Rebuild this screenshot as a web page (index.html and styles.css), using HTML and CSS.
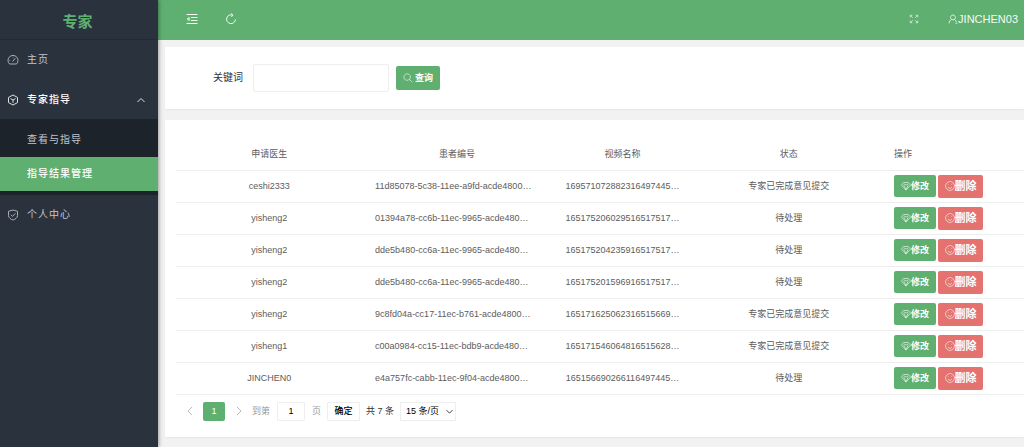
FILE: index.html
```html
<!DOCTYPE html>
<html lang="zh-CN">
<head>
<meta charset="utf-8">
<meta name="viewport" content="width=device-width, initial-scale=1">
<title>专家</title>
<link rel="stylesheet" href="styles.css">
</head>
<body>
<svg class="defs" aria-hidden="true">
  <symbol id="i-gauge" viewBox="0 0 12 12"><path d="M2.500 10A5 5 0 1 1 9.500 10Z M5.700 7.500L8.200 4.200 M2.500 6.500h.7 M6 2.800v.6"/></symbol>
  <symbol id="i-cube" viewBox="0 0 12 12"><path d="M6 1L10.500 3.400V8.600L6 11L1.500 8.600V3.400Z M3.500 4.600L6 6L8.500 4.600 M6 6V8.800"/></symbol>
  <symbol id="i-shield" viewBox="0 0 12 12"><path d="M6 1L10.500 2.300V6.500C10.500 9 8 10.300 6 11C4 10.300 1.500 9 1.500 6.500V2.300Z M3.800 5.800L5.500 7.400L8.400 4.400"/></symbol>
  <symbol id="i-up" viewBox="0 0 12 12"><path d="M2.500 8L6 4.500L9.500 8"/></symbol>
  <symbol id="i-down" viewBox="0 0 12 12"><path d="M2 4.200L6 8.200L10 4.200"/></symbol>
  <symbol id="i-left" viewBox="0 0 12 12"><path d="M8 2L4 6L8 10"/></symbol>
  <symbol id="i-right" viewBox="0 0 12 12"><path d="M4 2L8 6L4 10"/></symbol>
  <symbol id="i-fold" viewBox="0 0 12 12"><path d="M.5 1.500H11.500 M5 4.500H11.500 M5 7.500H11.500 M.5 10.500H11.500 M3.200 4.500L1.200 6L3.200 7.500Z"/></symbol>
  <symbol id="i-refresh" viewBox="0 0 12 12"><path d="M7.800 2.200A4.400 4.400 0 1 0 10.400 6.400 M6.200 .6L8 2.200L6.400 3.900"/></symbol>
  <symbol id="i-full" viewBox="0 0 12 12"><path d="M4.500 4.500L1.500 1.500M1.500 4V1.500H4 M7.500 4.500L10.500 1.500M8 1.500H10.500V4 M4.500 7.500L1.500 10.500M1.500 8V10.500H4 M7.500 7.500L10.500 10.500M10.500 8V10.500H8"/></symbol>
  <symbol id="i-user" viewBox="0 0 12 12"><path d="M6 1.200A2.900 2.900 0 1 1 5.900 1.200Z M4.500 6.500C2.500 7.300 1.500 9 1.300 11.200 M7.500 6.500C8.800 7.200 9.500 8.200 10 9.500 M9 11H11.200"/></symbol>
  <symbol id="i-search" viewBox="0 0 12 12"><path d="M5 1A3.900 3.900 0 1 1 4.900 1Z M7.800 7.700L11.200 11"/></symbol>
  <symbol id="i-gem" viewBox="0 0 12 12"><path d="M3 1.800H9L11.500 5L6 11L.5 5Z M3 5L4.500 3.800L6 5L7.500 3.800L9 5 M3.500 5.200L6 10.500L8.500 5.200"/></symbol>
  <symbol id="i-smile" viewBox="0 0 12 12"><circle cx="6" cy="6" r="5.300"/><path d="M3.500 7.300C4.500 9.200 7.500 9.200 8.500 7.300 M4 4.200V5 M8 4.200V5"/></symbol>
</svg>
<div class="app">
  <aside class="side">
    <h1 class="logo">专家</h1>
    <nav>
      <a class="item" href="#"><svg class="icon"><use href="#i-gauge"/></svg>主页</a>
      <a class="item open" href="#"><svg class="icon"><use href="#i-cube"/></svg>专家指导<svg class="icon caret"><use href="#i-up"/></svg></a>
      <div class="sub">
        <a class="subitem" href="#">查看与指导</a>
        <a class="subitem active" href="#">指导结果管理</a>
      </div>
      <a class="item" href="#"><svg class="icon"><use href="#i-shield"/></svg>个人中心</a>
    </nav>
  </aside>
  <div class="main">
    <header class="top">
      <button class="tool" aria-label="折叠菜单"><svg class="icon"><use href="#i-fold"/></svg></button>
      <button class="tool" aria-label="刷新"><svg class="icon"><use href="#i-refresh"/></svg></button>
      <button class="tool full" aria-label="全屏"><svg class="icon"><use href="#i-full"/></svg></button>
      <a class="user" href="#"><svg class="icon"><use href="#i-user"/></svg>JINCHEN03</a>
    </header>
    <main class="content">
      <form class="card search">
        <label for="kw">关键词</label>
        <input id="kw" class="kw" type="text">
        <button class="btn query" type="button"><svg class="icon"><use href="#i-search"/></svg>查询</button>
      </form>
      <section class="card list">
        <table class="grid">
          <colgroup><col class="c-doctor"><col class="c-patient"><col class="c-video"><col class="c-state"><col class="c-ops"></colgroup>
          <thead><tr><th>申请医生</th><th>患者编号</th><th>视频名称</th><th>状态</th><th class="ops">操作</th></tr></thead>
          <tbody>
            <tr><td>ceshi2333</td><td><div class="code">11d85078-5c38-11ee-a9fd-acde4800…</div></td><td>169571072882316497445…</td><td>专家已完成意见提交</td><td class="ops"><div class="acts"><button class="btn edit"><svg class="icon"><use href="#i-gem"/></svg>修改</button><button class="btn del"><svg class="icon"><use href="#i-smile"/></svg>删除</button></div></td></tr>
            <tr><td>yisheng2</td><td><div class="code">01394a78-cc6b-11ec-9965-acde480…</div></td><td>165175206029516517517…</td><td>待处理</td><td class="ops"><div class="acts"><button class="btn edit"><svg class="icon"><use href="#i-gem"/></svg>修改</button><button class="btn del"><svg class="icon"><use href="#i-smile"/></svg>删除</button></div></td></tr>
            <tr><td>yisheng2</td><td><div class="code">dde5b480-cc6a-11ec-9965-acde480…</div></td><td>165175204235916517517…</td><td>待处理</td><td class="ops"><div class="acts"><button class="btn edit"><svg class="icon"><use href="#i-gem"/></svg>修改</button><button class="btn del"><svg class="icon"><use href="#i-smile"/></svg>删除</button></div></td></tr>
            <tr><td>yisheng2</td><td><div class="code">dde5b480-cc6a-11ec-9965-acde480…</div></td><td>165175201596916517517…</td><td>待处理</td><td class="ops"><div class="acts"><button class="btn edit"><svg class="icon"><use href="#i-gem"/></svg>修改</button><button class="btn del"><svg class="icon"><use href="#i-smile"/></svg>删除</button></div></td></tr>
            <tr><td>yisheng2</td><td><div class="code">9c8fd04a-cc17-11ec-b761-acde4800…</div></td><td>165171625062316515669…</td><td>专家已完成意见提交</td><td class="ops"><div class="acts"><button class="btn edit"><svg class="icon"><use href="#i-gem"/></svg>修改</button><button class="btn del"><svg class="icon"><use href="#i-smile"/></svg>删除</button></div></td></tr>
            <tr><td>yisheng1</td><td><div class="code">c00a0984-cc15-11ec-bdb9-acde480…</div></td><td>165171546064816515628…</td><td>专家已完成意见提交</td><td class="ops"><div class="acts"><button class="btn edit"><svg class="icon"><use href="#i-gem"/></svg>修改</button><button class="btn del"><svg class="icon"><use href="#i-smile"/></svg>删除</button></div></td></tr>
            <tr><td>JINCHEN0</td><td><div class="code">e4a757fc-cabb-11ec-9f04-acde4800…</div></td><td>165156690266116497445…</td><td>待处理</td><td class="ops"><div class="acts"><button class="btn edit"><svg class="icon"><use href="#i-gem"/></svg>修改</button><button class="btn del"><svg class="icon"><use href="#i-smile"/></svg>删除</button></div></td></tr>
          </tbody>
        </table>
        <div class="pager">
          <button class="arrow" aria-label="上一页"><svg class="icon"><use href="#i-left"/></svg></button>
          <button class="page">1</button>
          <button class="arrow" aria-label="下一页"><svg class="icon"><use href="#i-right"/></svg></button>
          <label class="muted" for="pg">到第</label>
          <input id="pg" class="box num" type="text" value="1">
          <span class="muted">页</span>
          <button class="box go">确定</button>
          <span class="total">共 7 条</span>
          <div class="pick"><select class="box size" aria-label="每页条数"><option>15 条/页</option></select><svg class="icon"><use href="#i-down"/></svg></div>
        </div>
      </section>
    </main>
  </div>
</div>
</body>
</html>
```
FILE: styles.css
```css
* { box-sizing: border-box; }
body {
  margin: 0;
  background: #f2f2f2;
  color: #5c5c5c;
  font: 9px/16px "Liberation Sans", "Noto Sans CJK SC", sans-serif;
}
button, input, select { font: inherit; color: inherit; margin: 0; padding: 0; border: 0; background: none; }
a { color: inherit; text-decoration: none; }
.defs { display: none; }
.icon { width: 12px; height: 12px; flex: none; fill: none; stroke: currentColor; stroke-width: 1; }

.app { display: flex; min-height: 100vh; }
.side {
  width: 158px;
  flex: none;
  z-index: 1;
  background: #2a323e;
  color: #c2c5ca;
  box-shadow: 1px 0 4px rgba(0, 0, 0, .35);
}
.logo {
  margin: 0;
  height: 40px;
  padding-right: 3px;
  border-bottom: 1px solid #242b35;
  color: #5fb070;
  font-size: 15px;
  line-height: 44px;
  text-align: center;
}
.item { display: flex; align-items: center; gap: 8px; height: 40px; padding: 0 11px 0 7px; font-size: 10px; letter-spacing: 1px; }
.item .icon { opacity: .85; }
.open { height: 39px; color: #fff; font-weight: 500; }
.caret { margin-left: auto; }
.sub { padding: 4px 0; background: #1d232b; font-size: 10px; letter-spacing: 1px; }
.subitem { display: block; padding-left: 27px; line-height: 34px; }
.active { background: #5fb070; color: #fff; font-weight: 500; }

.main { flex: 1; min-width: 0; }
.top { display: flex; align-items: center; height: 40px; padding: 0 6px 3px 28px; background: #5fb070; color: #f4faf5; }
.tool { display: flex; margin-right: 27px; }
.full { margin-left: auto; margin-right: 29px; opacity: .8; }
.full .icon, .user .icon { width: 10px; height: 10px; }
.user { display: flex; align-items: center; font-size: 11px; }

.content { display: grid; gap: 11px; padding: 7px 0 9px 7px; }
.card { background: #fff; box-shadow: 0 1px 2px rgba(0, 0, 0, .05); }
.search { display: flex; align-items: center; height: 62px; padding-left: 48px; color: #333; font-size: 10px; }
.kw { width: 136px; height: 28px; margin: 0 7px 0 10px; padding: 0 6px; border: 1px solid #eee; border-radius: 2px; }
.btn { display: flex; align-items: center; justify-content: center; border-radius: 2px; background: #5fb070; color: #fff; font-weight: 700; }
.query { width: 44px; height: 24px; gap: 2px; font-size: 9px; }
.btn .icon { width: 10px; height: 10px; stroke-width: .8; opacity: .9; }

.list { padding: 18px 0 16px 11px; }
.grid { width: 100%; table-layout: fixed; border-collapse: collapse; }
.c-doctor { width: 22%; }
.c-patient { width: 22.300%; }
.c-video { width: 16.700%; }
.c-state { width: 22.500%; }
.c-ops { width: 16.500%; }
.grid th, .grid td { height: 32px; padding: 0; border-bottom: 1px solid #eee; font-weight: 400; text-align: center; white-space: nowrap; }
.grid .ops { padding-left: 10px; text-align: left; }
.code { width: 164px; margin: 0 auto; overflow: hidden; text-align: left; }
.acts { display: flex; align-items: center; gap: 2px; }
.edit { width: 42px; height: 22px; }
.del { width: 45px; height: 23px; background: #e4726e; font-size: 11px; }

.pager { display: flex; align-items: center; height: 19px; margin-top: 7px; color: #333; }
.arrow { display: flex; justify-content: center; width: 27px; color: #bbb; }
.page { width: 22px; height: 19px; border-radius: 2px; background: #5fb070; color: #fff; }
.muted { color: #999; }
.box { height: 19px; border: 1px solid #eee; border-radius: 1px; background: #fff; color: #000; }
.num { width: 28px; margin: 0 7px; text-align: center; }
.go { width: 33px; margin: 0 6px; font-weight: 500; }
.pick { position: relative; margin-left: 6px; }
.size { width: 56px; padding-left: 5px; appearance: none; }
.pick .icon { position: absolute; top: 5px; right: 2px; width: 9px; height: 9px; color: #000; pointer-events: none; }
```
